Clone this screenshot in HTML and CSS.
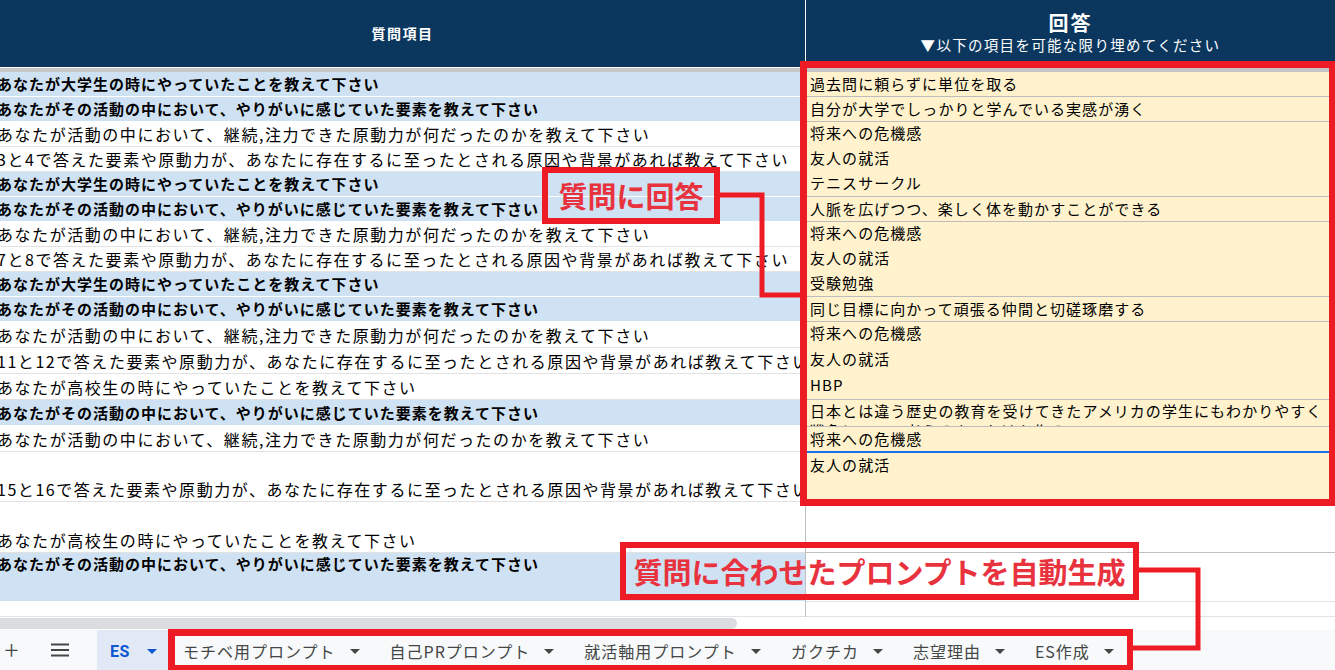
FILE: index.html
```html
<!DOCTYPE html>
<html lang="ja">
<head>
<meta charset="utf-8">
<title>ES</title>
<link rel="stylesheet" href="styles.css">
</head>
<body>
<div class="sheet">
  <div class="header">
    <div class="h-left">質問項目</div>
    <div class="h-right">
      <div class="h-title">回答</div>
      <div class="h-sub">▼以下の項目を可能な限り埋めてください</div>
    </div>
  </div>
  <div class="freeze"></div>
  <div class="grid">
    <div class="col-left">
      <div class="row q"><span>あなたが大学生の時にやっていたことを教えて下さい</span></div>
      <div class="row q"><span>あなたがその活動の中において、やりがいに感じていた要素を教えて下さい</span></div>
      <div class="row"><span>あなたが活動の中において、継続,注力できた原動力が何だったのかを教えて下さい</span></div>
      <div class="row"><span>3と4で答えた要素や原動力が、あなたに存在するに至ったとされる原因や背景があれば教えて下さい</span></div>
      <div class="row q"><span>あなたが大学生の時にやっていたことを教えて下さい</span></div>
      <div class="row q"><span>あなたがその活動の中において、やりがいに感じていた要素を教えて下さい</span></div>
      <div class="row"><span>あなたが活動の中において、継続,注力できた原動力が何だったのかを教えて下さい</span></div>
      <div class="row"><span>7と8で答えた要素や原動力が、あなたに存在するに至ったとされる原因や背景があれば教えて下さい</span></div>
      <div class="row q"><span>あなたが大学生の時にやっていたことを教えて下さい</span></div>
      <div class="row q"><span>あなたがその活動の中において、やりがいに感じていた要素を教えて下さい</span></div>
      <div class="row h26"><span>あなたが活動の中において、継続,注力できた原動力が何だったのかを教えて下さい</span></div>
      <div class="row h26"><span>11と12で答えた要素や原動力が、あなたに存在するに至ったとされる原因や背景があれば教えて下さい</span></div>
      <div class="row h26"><span>あなたが高校生の時にやっていたことを教えて下さい</span></div>
      <div class="row q h26"><span>あなたがその活動の中において、やりがいに感じていた要素を教えて下さい</span></div>
      <div class="row h26"><span>あなたが活動の中において、継続,注力できた原動力が何だったのかを教えて下さい</span></div>
      <div class="row h50"><span>15と16で答えた要素や原動力が、あなたに存在するに至ったとされる原因や背景があれば教えて下さい</span></div>
      <div class="row h51"><span>あなたが高校生の時にやっていたことを教えて下さい</span></div>
      <div class="row q h49 top"><span>あなたがその活動の中において、やりがいに感じていた要素を教えて下さい</span></div>
      <div class="row h15"></div>
    </div>
    <div class="col-right">
      <div class="cell h25">過去問に頼らずに単位を取る</div>
      <div class="cell h25">自分が大学でしっかりと学んでいる実感が湧く</div>
      <div class="cell h75"><div class="stack">将来への危機感<br>友人の就活<br>テニスサークル</div></div>
      <div class="cell h25">人脈を広げつつ、楽しく体を動かすことができる</div>
      <div class="cell h75"><div class="stack">将来への危機感<br>友人の就活<br>受験勉強</div></div>
      <div class="cell h25">同じ目標に向かって頑張る仲間と切磋琢磨する</div>
      <div class="cell h78 l26"><div class="stack">将来への危機感<br>友人の就活<br>HBP</div></div>
      <div class="cell h27 tight">日本とは違う歴史の教育を受けてきたアメリカの学生にもわかりやすく<br>戦争について考えるきっかけを作る</div>
      <div class="cell h26 sel">将来への危機感</div>
      <div class="cell h49">友人の就活</div>
      <div class="cell blank h51"></div>
      <div class="cell blank h49 light"></div>
      <div class="cell blank h15 light"></div>
    </div>
  </div>
  <div class="hscroll"><div class="thumb"></div></div>
  <div class="tabs">
    <div class="tab-icon add">+</div>
    <div class="tab-icon menu">
      <svg width="20" height="14" viewBox="0 0 20 14"><path d="M1 1.5h18M1 7h18M1 12.5h18" stroke="#444746" stroke-width="2"/></svg>
    </div>
    <div class="tab active">ES<span class="caret"></span></div>
    <div class="tab first">モチベ用プロンプト<span class="caret"></span></div>
    <div class="tab">自己PRプロンプト<span class="caret"></span></div>
    <div class="tab">就活軸用プロンプト<span class="caret"></span></div>
    <div class="tab">ガクチカ<span class="caret"></span></div>
    <div class="tab">志望理由<span class="caret"></span></div>
    <div class="tab">ES作成<span class="caret"></span></div>
  </div>

  <div class="mark mark-answer"></div>
  <div class="mark label label-answer">質問に回答</div>
  <div class="mark label label-prompt">質問に合わせたプロンプトを自動生成</div>
  <div class="mark mark-tabs"></div>
  <svg class="connectors" width="1335" height="670" viewBox="0 0 1335 670">
    <polyline points="719,195 762,195 762,295 801,295" fill="none" stroke="#ed1c24" stroke-width="5"/>
    <polyline points="1138,570 1198,570 1198,648 1132,648" fill="none" stroke="#ed1c24" stroke-width="5"/>
  </svg>
</div>
</body>
</html>
```
FILE: styles.css
```css
* { box-sizing: border-box; margin: 0; padding: 0; }
html, body { width: 1335px; height: 670px; overflow: hidden; background: #fff; }
body { font-family: "Noto Sans CJK JP", "Noto Sans", sans-serif; color: #000; }
.sheet { position: relative; width: 1335px; height: 670px; overflow: hidden; }

.header { display: grid; grid-template-columns: 806px 529px; height: 68px; background: #0b375f; border-bottom: 1px solid #fff; color: #fff; }
.h-left { display: flex; align-items: center; justify-content: center; border-right: 1px solid #fff; font-weight: 700; font-size: 14px; letter-spacing: 1.5px; padding-bottom: 1px; }
.h-right { display: flex; flex-direction: column; align-items: center; padding-top: 10px; }
.h-title { font-weight: 700; font-size: 20px; line-height: 25px; letter-spacing: 2px; }
.h-sub { font-size: 14.5px; line-height: 19px; letter-spacing: 1.3px; }
.freeze { height: 4px; background: #c6c6c6; }

.grid { display: grid; grid-template-columns: 806px 529px; }
.col-left { border-right: 1px solid #c0c0c0; }
.row { height: 25px; border-bottom: 1px solid #e2e2e2; display: flex; align-items: flex-end; padding-bottom: 2px; white-space: nowrap; overflow: hidden; font-size: 16px; line-height: 20px; letter-spacing: 1.55px; }
.row span { margin-left: -3px; }
.row.q { background: #cfe2f3; font-weight: 700; font-size: 15px; letter-spacing: 1px; border-bottom-color: #fff; }
.row.top { align-items: flex-start; padding-top: 1px; }
.h26 { height: 26px; }
.h50 { height: 50px; }
.h51 { height: 51px; }
.h49 { height: 49px; }
.h15 { height: 15px; }
.h25 { height: 25px; }
.h27 { height: 27px; }
.h75 { height: 75px; }
.h78 { height: 78px; }

.cell { background: #fff2cc; border-bottom: 1px solid #bdbdbd; padding-left: 4px; font-size: 15px; line-height: 23px; letter-spacing: 1.05px; overflow: hidden; white-space: nowrap; }
.cell.h75 { line-height: 25px; }
.cell.l26 { line-height: 26px; }
.stack { margin-top: -2px; }
.cell.tight { line-height: 20px; padding-top: 1px; }
.cell.sel { border-bottom: 2px solid #1a73e8; }
.cell.blank { background: #fff; border-bottom-color: #c0c0c0; }
.cell.light { border-bottom-color: #e2e2e2; }

.hscroll { height: 13px; padding-top: 1px; }
.thumb { width: 737px; height: 11px; background: #dadce0; border-radius: 0 6px 6px 0; }

.tabs { height: 40px; background: #f8f9fa; display: flex; align-items: stretch; color: #444746; font-size: 16px; letter-spacing: 1px; }
.tab-icon { display: flex; align-items: center; justify-content: center; }
.tab-icon.add { width: 24px; font-size: 26px; font-weight: 300; line-height: 1; padding-bottom: 2px; }
.tab-icon.menu { width: 44px; margin-left: 14px; }
.tab { display: flex; align-items: center; padding: 2px 15px 0; white-space: nowrap; }
.tab.first { padding-left: 14px; }
.tab.active { width: 72px; margin-left: 15px; padding-left: 13px; background: #e1e9f7; color: #0b57d0; font-weight: 700; font-family: "Roboto", "Noto Sans CJK JP", sans-serif; letter-spacing: 0.5px; }
.caret { display: inline-block; width: 0; height: 0; margin-left: 14px; border-left: 5px solid transparent; border-right: 5px solid transparent; border-top: 5px solid currentColor; }
.tab.active .caret { margin-left: 17px; }

.mark { position: absolute; border: 7px solid #ed1c24; }
.mark-answer { left: 800px; top: 61px; width: 536px; height: 445px; }
.mark-tabs { left: 168px; top: 629px; width: 965px; height: 42px; border-width: 7px 6px 6px 7px; }
.label { border-width: 6px; display: flex; align-items: center; justify-content: center; color: #e8333f; font-weight: 700; font-size: 29px; line-height: 1; white-space: nowrap; }
.label-answer { left: 542px; top: 167px; width: 178px; height: 57px; }
.label-prompt { left: 620px; top: 542px; width: 519px; height: 58px; }
.connectors { position: absolute; left: 0; top: 0; pointer-events: none; }
```
